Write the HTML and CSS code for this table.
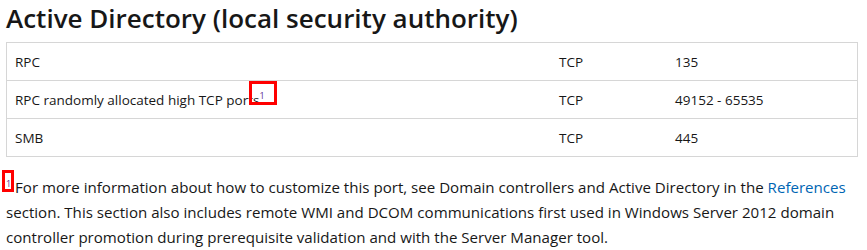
FILE: index.html
```html
<!DOCTYPE html>
<html lang="en">
<head>
<meta charset="utf-8">
<title>Active Directory (local security authority)</title>
<link rel="stylesheet" href="styles.css">
</head>
<body>
<main class="content">
  <h2 class="title">Active Directory (local security authority)</h2>
  <table class="ports">
    <tbody>
      <tr><td class="c-app">RPC</td><td class="c-proto">TCP</td><td class="c-port">135</td></tr>
      <tr><td class="c-app">RPC randomly allocated high TCP ports<sup class="note mark-inline"><a class="note-link" href="#fn1">1</a></sup></td><td class="c-proto">TCP</td><td class="c-port">49152 - 65535</td></tr>
      <tr><td class="c-app">SMB</td><td class="c-proto">TCP</td><td class="c-port">445</td></tr>
    </tbody>
  </table>
  <p class="footnote" id="fn1"><sup class="note mark-start"><span class="note-link">1</span></sup> For more information about how to customize this port, see Domain controllers and Active Directory in the <a class="link" href="#">References</a> section. This section also includes remote WMI and DCOM communications first used in Windows Server 2012 domain controller promotion during prerequisite validation and with the Server Manager tool.</p>
</main>
</body>
</html>
```

FILE: styles.css
```css
html, body {
  margin: 0;
  padding: 0;
  background: #ffffff;
}
body {
  font-family: "Open Sans", "Noto Sans", "Liberation Sans", sans-serif;
  color: #171717;
}
.content {
  padding: 0 6px;
}
.title {
  margin: 0 0 6px 0;
  font-size: 26px;
  line-height: 36px;
  font-weight: 600;
  color: #171717;
}
.ports {
  width: 852px;
  border-collapse: collapse;
  border: 1px solid #d6d6d6;
  font-size: 13.5px;
}
.ports td {
  height: 37px;
  padding: 0 8px;
  border-top: 1px solid #d6d6d6;
  vertical-align: middle;
}
.c-app { width: 528px; }
.c-proto { width: 100px; }
.note {
  position: relative;
  display: inline-block;
  font-size: 9px;
  line-height: 8px;
  vertical-align: 6px;
}
.note-link {
  color: #5c2e91;
  text-decoration: none;
}
.mark-inline::after,
.mark-start::after {
  content: "";
  position: absolute;
  box-sizing: border-box;
  border: 3px solid #ff0000;
}
.mark-inline::after {
  left: -10px;
  top: -11px;
  width: 28px;
  height: 24px;
}
.mark-start::after {
  left: -4px;
  top: -10px;
  width: 12px;
  height: 22px;
}
.footnote {
  margin: 18px 0 0 0;
  font-size: 15.1px;
  line-height: 25px;
}
.link {
  color: #0065b3;
  text-decoration: none;
}
```
